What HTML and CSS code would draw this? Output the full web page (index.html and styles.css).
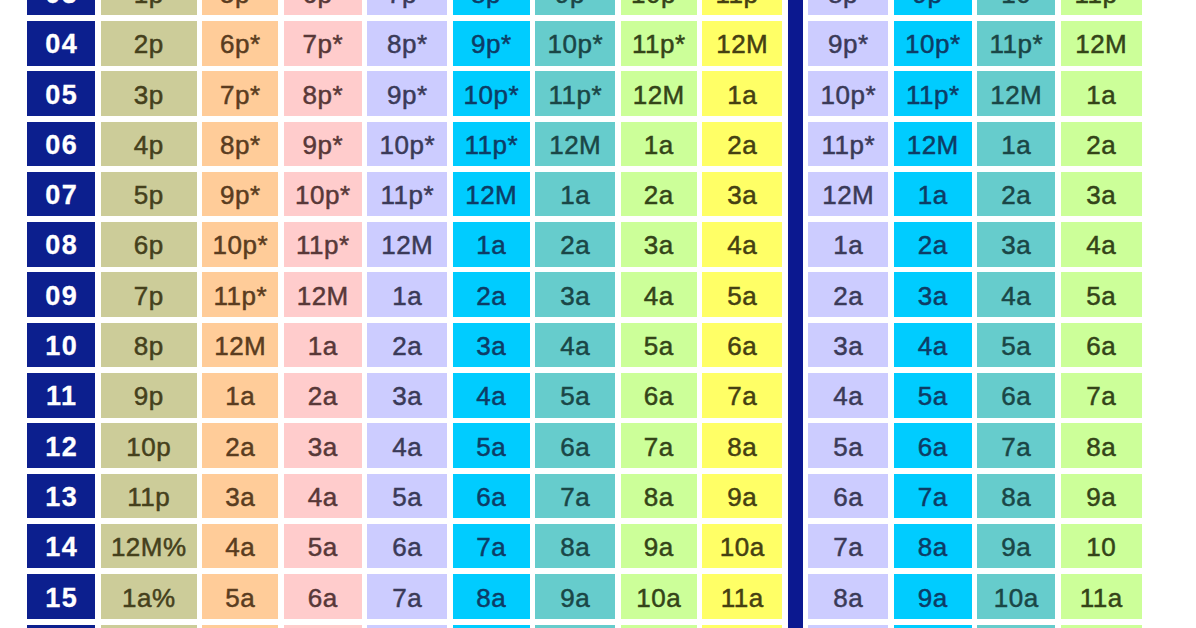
FILE: index.html
```html
<!DOCTYPE html>
<html>
<head>
<meta charset="utf-8">
<link rel="stylesheet" href="styles.css">
</head>
<body>
<div class="viewport">
<div class="grid" id="grid">
<div class="bar"></div>
</div>
</div>
<script>
var rows = [
["03","1p","5p*","6p*","7p*","8p*","9p*","10p*","11p*","8p*","9p*","10","11p*"],
["04","2p","6p*","7p*","8p*","9p*","10p*","11p*","12M","9p*","10p*","11p*","12M"],
["05","3p","7p*","8p*","9p*","10p*","11p*","12M","1a","10p*","11p*","12M","1a"],
["06","4p","8p*","9p*","10p*","11p*","12M","1a","2a","11p*","12M","1a","2a"],
["07","5p","9p*","10p*","11p*","12M","1a","2a","3a","12M","1a","2a","3a"],
["08","6p","10p*","11p*","12M","1a","2a","3a","4a","1a","2a","3a","4a"],
["09","7p","11p*","12M","1a","2a","3a","4a","5a","2a","3a","4a","5a"],
["10","8p","12M","1a","2a","3a","4a","5a","6a","3a","4a","5a","6a"],
["11","9p","1a","2a","3a","4a","5a","6a","7a","4a","5a","6a","7a"],
["12","10p","2a","3a","4a","5a","6a","7a","8a","5a","6a","7a","8a"],
["13","11p","3a","4a","5a","6a","7a","8a","9a","6a","7a","8a","9a"],
["14","12M%","4a","5a","6a","7a","8a","9a","10a","7a","8a","9a","10"],
["15","1a%","5a","6a","7a","8a","9a","10a","11a","8a","9a","10a","11a"],
["16","2a%","6a","7a","8a","9a","10a","11a","12N","9a","10a","11a","12N"]
];
var cls = ["lbl","tan","org","pnk","lav","cyn","tea","grn","yel","lav","cyn","tea","grn"];
var g = document.getElementById("grid");
rows.forEach(function(r){
  r.forEach(function(t,i){
    var d = document.createElement("div");
    d.className = "cell " + cls[i];
    d.textContent = t;
    g.appendChild(d);
  });
});
</script>
</body>
</html>
```
FILE: styles.css
```css
html, body {
  margin: 0;
  padding: 0;
  background: #ffffff;
}
.viewport {
  width: 1196px;
  height: 628px;
  overflow: hidden;
}
.grid {
  display: grid;
  grid-template-columns: 68px 96px 76px 78px 80px 77px 80px 76px 80px 15px 80px 78px 78px 81px;
  grid-template-rows: repeat(14, 44.5px);
  column-gap: 5.5px;
  row-gap: 5.8px;
  margin-top: -29.3px;
  padding-left: 27px;
  font-family: "Liberation Sans", Arial, sans-serif;
  font-size: 26px;
}
.bar {
  grid-column: 10;
  grid-row: 1 / -1;
  background: #0b1890;
  margin-top: -10px;
  margin-bottom: -10px;
}
.cell {
  display: flex;
  align-items: center;
  justify-content: center;
  line-height: 1;
  padding-top: 2px;
  padding-left: 0.5px;
  color: #333333;
  letter-spacing: 0.5px;
  -webkit-text-stroke: 0.5px currentColor;
}
.lbl {
  background: #0c1f8e;
  color: #ffffff;
  font-weight: bold;
  font-size: 27px;
  letter-spacing: 1.5px;
  padding-left: 1.5px;
  padding-top: 3px;
  -webkit-text-stroke: 0.3px #ffffff;
}
.tan { background: #cccc99; color: #45401c; }
.org { background: #ffcc99; color: #5a3c20; }
.pnk { background: #ffcccc; color: #583838; }
.lav { background: #ccccff; color: #3a3a58; }
.cyn { background: #00ccff; color: #0d3c66; }
.tea { background: #66cccc; color: #1a4646; }
.grn { background: #ccff99; color: #344418; }
.yel { background: #ffff66; color: #454012; }
```
